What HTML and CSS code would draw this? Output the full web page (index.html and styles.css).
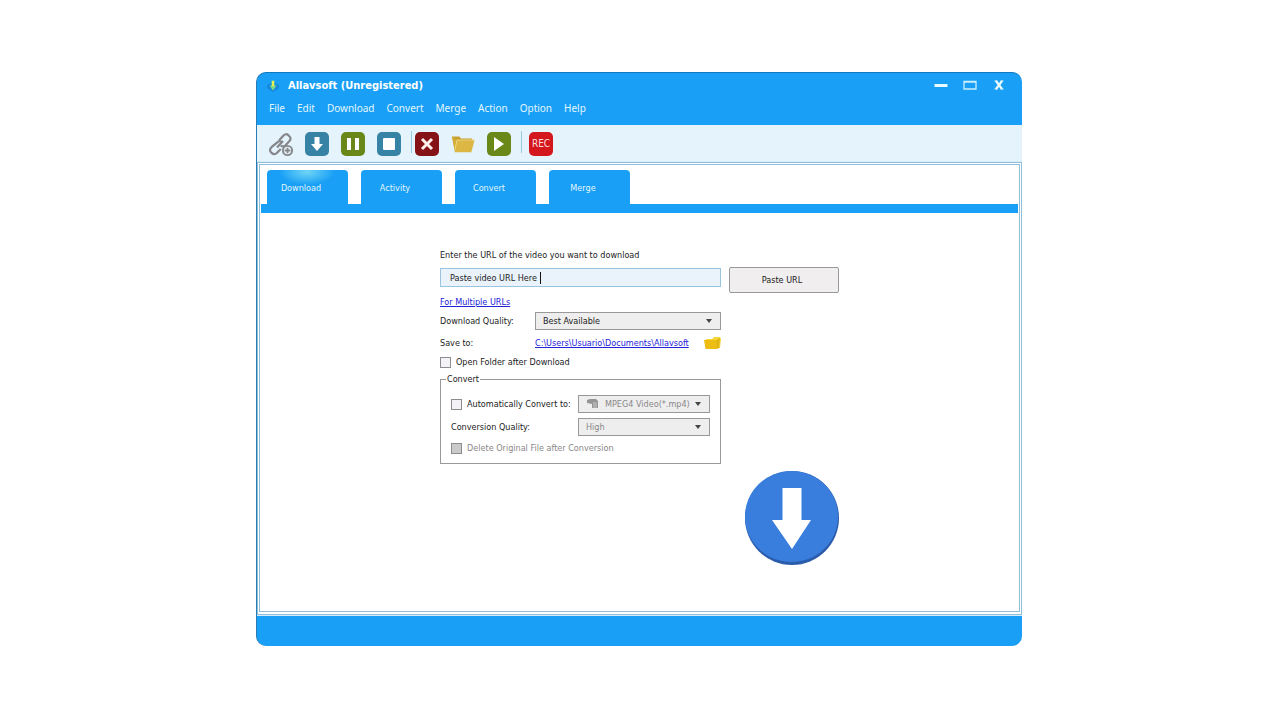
FILE: index.html
```html
<!DOCTYPE html>
<html lang="en">
  <head>
    <meta charset="UTF-8" />
    <meta name="viewport" content="width=device-width, initial-scale=1.0" />
    <title>Allavsoft (Unregistered)</title>
    <link rel="stylesheet" href="styles.css">
  </head>
  <body>
    <div class="window">
      <header class="header">
        <div class="titlebar">
          <svg class="app-icon" width="12" height="12" viewBox="0 0 12 12">
            <path d="M0 5l6-3 6 3v3l-6 4-6-4z" fill="#1488de" />
            <path d="M4.500 0.500h3v5h2L6 10.500 2.500 5.500h2z" fill="#7fdc84" />
            <path d="M5 1h2v5H5z" fill="#e8ee58" />
          </svg>
          <h1>Allavsoft (Unregistered)</h1>
          <div class="window-buttons">
            <button type="button" aria-label="Minimize">
              <svg width="14" height="12" viewBox="0 0 14 12"><path d="M0.500 5.500h13" stroke="#e8fbff" stroke-width="3" /></svg>
            </button>
            <button type="button" aria-label="Maximize">
              <svg width="14" height="12" viewBox="0 0 14 12"><path d="M1 1.500h12V9H1z M0.500 2h13" fill="none" stroke="#c9f0ff" stroke-width="1.300" /></svg>
            </button>
            <button type="button" aria-label="Close">
              <svg width="14" height="12" viewBox="0 0 14 12"><path d="M4 1l6 8M10 1l-6 8" stroke="#e8fbff" stroke-width="2.200" /><path d="M2.500 1h3M8.500 1h3M2.500 9h3M8.500 9h3" stroke="#e8fbff" /></svg>
            </button>
          </div>
        </div>
        <nav class="menu">
          <a href="#">File</a>
          <a href="#">Edit</a>
          <a href="#">Download</a>
          <a href="#">Convert</a>
          <a href="#">Merge</a>
          <a href="#">Action</a>
          <a href="#">Option</a>
          <a href="#">Help</a>
        </nav>
      </header>

      <div class="toolbar">
        <button type="button" aria-label="Add link">
          <svg width="25" height="26" viewBox="0 0 25 26" fill="none" stroke="#85878a" stroke-width="2.200">
            <path d="M11 9.500l4.500-5c1.400-1.600 3.400-1.700 4.900-.3l1 1c1.500 1.400 1.500 3.300.1 4.800l-4 4.200c-1.500 1.500-3.300 1.500-4.800.3" />
            <path d="M14.500 11.500c-1.700-1.700-3.700-1.600-5.200-.1l-5.800 4.800c-1.800 1.600-1.900 3.500-.5 5l.9.9c1.500 1.500 3.400 1.400 4.900-.1l4-4" />
            <path d="M9 16.500l6-6.500" />
            <circle cx="19.500" cy="19.500" r="4.600" fill="#e7f3fc" stroke-width="1.900" />
            <path d="M19.500 16.700v5.600M16.700 19.500h5.600" stroke-width="1.800" />
          </svg>
        </button>
        <button type="button" class="tool blue" aria-label="Download">
          <svg width="24" height="24" viewBox="0 0 24 24"><path d="M9.500 5h5v7H18l-6 7-6-7h3.500z" fill="#fff" /></svg>
        </button>
        <button type="button" class="tool green" aria-label="Pause">
          <svg width="24" height="24" viewBox="0 0 24 24"><path d="M6 6h4v12H6zM14 6h4v12h-4z" fill="#fff" /></svg>
        </button>
        <button type="button" class="tool blue" aria-label="Stop">
          <svg width="24" height="24" viewBox="0 0 24 24"><rect x="6" y="6" width="12" height="12" rx="1" fill="#fff" /></svg>
        </button>
        <span class="separator"></span>
        <button type="button" class="tool dark-red" aria-label="Delete">
          <svg width="24" height="24" viewBox="0 0 24 24"><path d="M7 7l10 10M17 7L7 17" stroke="#fff0ec" stroke-width="3" /></svg>
        </button>
        <button type="button" aria-label="Open folder">
          <svg width="24" height="24" viewBox="0 0 26 26">
            <path d="M1 5h8l2 2h12v3H6L4 18z" fill="#c8a130" />
            <path d="M5 9h20.500L22 22H4z" fill="#dcb743" />
            <path d="M1 5l3 16 2-12" fill="#d3ac38" />
            <path d="M4.300 19L6.500 8.700h19" fill="none" stroke="#f1da86" stroke-width="1" />
          </svg>
        </button>
        <button type="button" class="tool green" aria-label="Play">
          <svg width="24" height="24" viewBox="0 0 24 24"><path d="M7 5v14l10-7z" fill="#fff" /></svg>
        </button>
        <span class="separator wide"></span>
        <button type="button" class="tool red">REC</button>
      </div>

      <main class="panel">
        <nav class="tabs">
          <button type="button" class="tab active">Download</button>
          <button type="button" class="tab">Activity</button>
          <button type="button" class="tab">Convert</button>
          <button type="button" class="tab">Merge</button>
        </nav>

        <form class="form">
          <label class="url-label" for="url">Enter the URL of the video you want to download</label>
          <div class="url-field">
            <input class="url" id="url" type="text" value="Paste video URL Here">
            <span class="caret"></span>
          </div>
          <button type="button" class="paste">Paste URL</button>

          <div class="options">
            <a href="#" class="link">For Multiple URLs</a>
            <div class="row">
              <label for="quality">Download Quality:</label>
              <div class="select">
                <select id="quality"><option>Best Available</option></select>
              </div>
            </div>
            <div class="row save">
              <span>Save to:</span>
              <div class="path">
                <a href="#" class="link">C:\Users\Usuario\Documents\Allavsoft</a>
                <svg width="18" height="14" viewBox="0 0 18 14">
                  <path d="M3 3h6l2-2h6l1 2-1 9H3z" fill="#f7d63a" />
                  <path d="M1 4h12l1 9H2.500z" fill="#edbd13" />
                  <path d="M13 4l4-2-1 10-2 1z" fill="#e0b414" />
                </svg>
              </div>
            </div>
            <label class="check"><input type="checkbox"> Open Folder after Download</label>

            <fieldset class="convert">
              <legend>Convert</legend>
              <div class="row">
                <label class="check"><input type="checkbox"> Automatically Convert to:</label>
                <div class="select with-icon">
                  <svg class="format-icon" width="12" height="12" viewBox="0 0 12 12">
                    <path d="M0 2l3-1h6l2 2v7H5V6L0 5z" fill="#959595" />
                    <path d="M6 5h4M6 7h4M6 9h4" stroke="#c8c8c8" />
                  </svg>
                  <select aria-label="Output format" disabled><option>MPEG4 Video(*.mp4)</option></select>
                </div>
              </div>
              <div class="row">
                <label for="conversion">Conversion Quality:</label>
                <div class="select">
                  <select id="conversion" disabled><option>High</option></select>
                </div>
              </div>
              <label class="check disabled"><input type="checkbox" disabled> Delete Original File after Conversion</label>
            </fieldset>
          </div>

          <button type="button" class="start" aria-label="Start download">
            <svg width="94" height="94" viewBox="0 0 94 94">
              <circle cx="47" cy="47" r="47" fill="#2b5cab" />
              <ellipse cx="46.500" cy="45.500" rx="46.500" ry="45.500" fill="#397edc" />
              <path d="M37.500 17h19v32H66L47 78 27 49h10.500z" fill="#fff" />
            </svg>
          </button>
        </form>
      </main>

      <footer class="footer"></footer>
    </div>
  </body>
</html>
```

FILE: styles.css
```css
* {
  box-sizing: border-box;
}

body {
  margin: 0;
  padding: 72px 20%;
  background: #fff;
  color: #222;
  font-family: "DejaVu Sans Condensed", Tahoma, sans-serif;
  font-size: 9px;
  line-height: 14px;
}

button,
input,
select {
  font: inherit;
  color: inherit;
  margin: 0;
}

button {
  border: none;
  padding: 0;
  background: none;
}

svg {
  display: block;
}

.window {
  display: flex;
  flex-direction: column;
  max-width: 766px;
  min-height: calc(100vh - 146px);
  background: #199ff5;
  border-top: 1px solid #1279c0;
  border-left: 1px solid #2a7cb4;
  border-radius: 10px;
  overflow: hidden;
}

.header {
  height: 52px;
  color: #e2f6ff;
}

.titlebar {
  display: flex;
  align-items: center;
  height: 26px;
  padding: 0 16px 0 10px;
}

.app-icon {
  margin-right: 9px;
}

.titlebar h1 {
  flex: 1;
  margin: 0;
  font-size: 11px;
  font-weight: bold;
  color: #fff;
}

.window-buttons {
  display: flex;
  gap: 15px;
}

.menu {
  display: flex;
  gap: 12px;
  padding: 2px 12px;
  font-family: "Noto Sans", sans-serif;
  font-size: 10px;
}

.menu a {
  color: inherit;
  text-decoration: none;
}

.toolbar {
  display: flex;
  align-items: center;
  gap: 12px;
  height: 37px;
  padding: 2px 11px 0;
  background: #e5f3fc;
  border-bottom: 1px solid #a5c6dc;
}

.tool {
  width: 24px;
  height: 24px;
  border-radius: 5px;
  overflow: hidden;
}

.blue {
  background: #3683a5;
}

.green {
  background: #698817;
}

.dark-red {
  background: #841216;
}

.red {
  background: #d3171d;
  color: #ffdfdf;
  font-size: 10px;
}

.separator {
  width: 1px;
  height: 22px;
  margin: 0 -9px 4px -2px;
  background: #9bcbe2;
}

.separator.wide {
  margin-right: -5px;
}

.panel {
  flex: 1;
  padding: 5px 1px 1px;
  background: #fff;
  border: 3px double #8fbfdb;
  border-bottom-width: 4px;
  outline: 1px solid #d5edf9;
}

.tabs {
  display: flex;
  gap: 13px;
  padding-left: 6px;
  border-bottom: 9px solid #199ff5;
}

.tab {
  width: 81px;
  height: 34px;
  padding: 1px 13px 0 0;
  border-radius: 4px 4px 0 0;
  background: #199ff5;
  color: #e2f6ff;
}

.tab.active {
  background: radial-gradient(ellipse 28px 13px at 40px 2px, #70d5f6, #199ff5);
}

.form {
  display: grid;
  grid-template-columns: minmax(0, 1fr) 110px;
  column-gap: 8px;
  max-width: 399px;
  margin: 0 auto;
  padding-top: 35px;
}

.url-label {
  grid-column: 1 / -1;
  margin-bottom: 5px;
}

.url-field {
  position: relative;
}

.url {
  width: 100%;
  height: 19px;
  margin-top: 1px;
  padding: 0 9px;
  border: 1px solid #9bc4de;
  background: #eaf3fb;
  outline: none;
}

.caret {
  position: absolute;
  top: 5px;
  left: 100px;
  width: 1px;
  height: 12px;
  background: #111;
}

.paste {
  height: 26px;
  padding-right: 4px;
  border: 1px solid #999;
  border-radius: 2px;
  background: #f0eeef;
}

.link {
  color: #2222d8;
}

.options {
  display: flex;
  flex-direction: column;
}

.options > .link {
  margin: 2px 0 3px;
  align-self: flex-start;
}

.row {
  display: grid;
  grid-template-columns: 95px minmax(0, 1fr);
  align-items: center;
  min-height: 18px;
}

.save {
  margin: 4px 0 3px;
}

.path {
  display: flex;
  align-items: center;
  justify-content: space-between;
  white-space: nowrap;
}

.select {
  position: relative;
}

.select select {
  display: block;
  width: 100%;
  height: 18px;
  padding: 0 7px;
  appearance: none;
  border: 1px solid #999;
  border-radius: 0;
  background: #efeeef;
  opacity: 1;
}

.select select:disabled {
  color: #888;
}

.select::after {
  content: "";
  position: absolute;
  top: 7px;
  right: 9px;
  border: 3px solid transparent;
  border-top: 4px solid #444;
  border-bottom: none;
}

.select.with-icon select {
  padding: 0 0 0 26px;
}

.format-icon {
  position: absolute;
  top: 3px;
  left: 9px;
}

.check {
  display: flex;
  align-items: center;
  gap: 5px;
  white-space: nowrap;
}

.check input {
  flex: none;
  appearance: none;
  width: 11px;
  height: 11px;
  border: 1px solid #8d8d8d;
  background: #f4f2f6;
}

.check.disabled {
  color: #888;
}

.check.disabled input {
  background: #ccc9cb;
}

.convert {
  display: flex;
  flex-direction: column;
  gap: 5px;
  min-width: 0;
  margin: 3px 0 0;
  padding: 9px 10px 8px;
  border: 1px solid #999;
}

.convert legend {
  margin-left: -5px;
  padding: 0 1px;
}

.convert .row {
  grid-template-columns: 127px minmax(0, 1fr);
}

.start {
  grid-column: 2;
  grid-row: 4;
  justify-self: end;
  margin-top: 7px;
}

.footer {
  height: 31px;
}
```
